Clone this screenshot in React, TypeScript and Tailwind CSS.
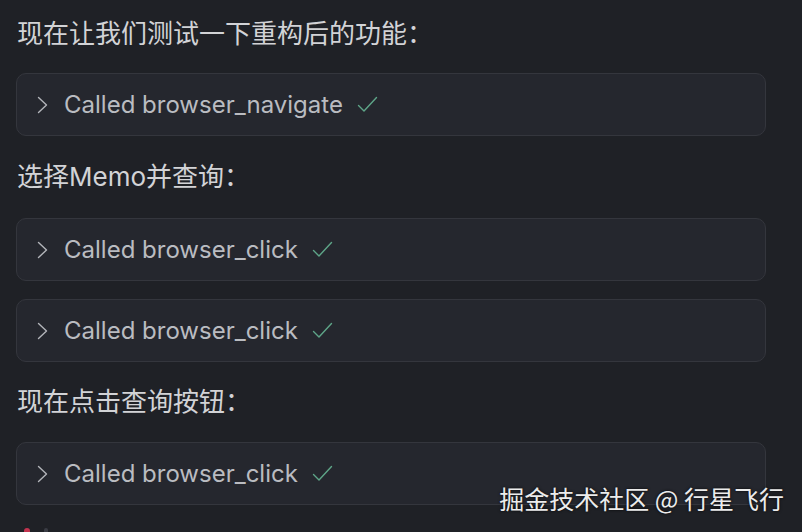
const font = { fontFamily: 'Inter, "Noto Sans CJK SC", sans-serif' };

function Heading({ children }: { children: React.ReactNode }) {
  return (
    <p className="h-10 flex items-center text-[26px] text-[#d2d3d6] leading-10">
      {children}
    </p>
  );
}

function ToolCall({ name }: { name: string }) {
  return (
    <div className="h-[63px] w-[750px] flex items-center rounded-[10px] border border-[#34363d] bg-[#25272e] pl-[20px]">
      <svg width="12" height="18" viewBox="0 0 12 18" fill="none" className="text-[#b3b5ba]">
        <path d="M1.5 1.5 9.5 9l-8 7.5" stroke="currentColor" strokeWidth="1.4" strokeLinecap="round" strokeLinejoin="round" />
      </svg>
      <span className="ml-[15px] text-[24px] text-[#babcc1]">Called {name}</span>
      <svg width="21" height="17" viewBox="0 0 21 17" fill="none" className="ml-[14px] text-[#5ea588]">
        <path d="M1.5 9.5 7 15 19.5 1.5" stroke="currentColor" strokeWidth="1.4" strokeLinecap="round" strokeLinejoin="round" />
      </svg>
    </div>
  );
}

export default function App() {
  return (
    <div className="relative h-[532px] w-[802px] overflow-hidden bg-[#1f2126]" style={font}>
      <div className="flex flex-col pl-[16px] pt-[14px]">
        <div className="pl-px">
          <Heading>现在让我们测试一下重构后的功能：</Heading>
        </div>
        <div className="mt-[19px]">
          <ToolCall name="browser_navigate" />
        </div>
        <div className="mt-[21px] pl-px">
          <Heading>选择Memo并查询：</Heading>
        </div>
        <div className="mt-[21px] flex flex-col gap-[18px]">
          <ToolCall name="browser_click" />
          <ToolCall name="browser_click" />
        </div>
        <div className="mt-[20px] pl-px">
          <Heading>现在点击查询按钮：</Heading>
        </div>
        <div className="mt-[20px]">
          <ToolCall name="browser_click" />
        </div>
        <div className="mt-[23px] pl-[8px] flex gap-[14px]">
          <span className="h-[10px] w-[6px] rounded-full bg-[#c2334f]" />
          <span className="h-[10px] w-[4px] rounded-full bg-[#3a3c44]" />
        </div>
      </div>
      <div
        className="absolute right-[18px] top-[482px] text-[25px] leading-[32px] text-[#ececec] [text-shadow:0_0_3px_rgba(0,0,0,0.9)]"
        style={{ fontFamily: '"Noto Sans CJK SC", sans-serif' }}
      >
        掘金技术社区 @ 行星飞行
      </div>
    </div>
  );
}
